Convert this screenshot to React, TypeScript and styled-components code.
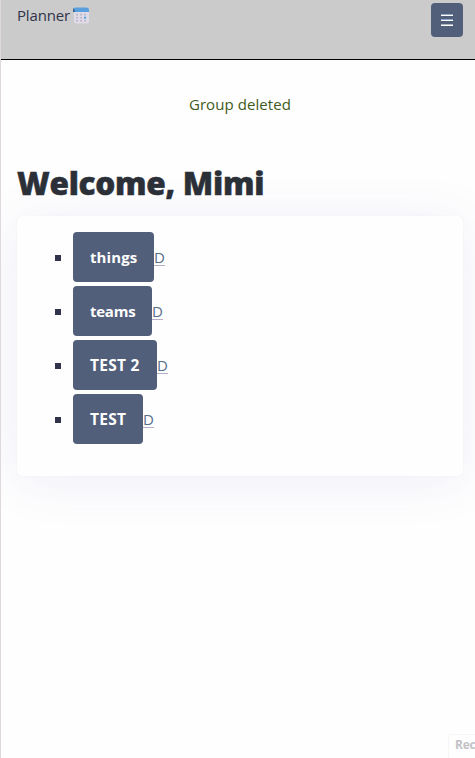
import React from "react";
import styled, { createGlobalStyle } from "styled-components";

const GlobalStyle = createGlobalStyle`
  *, *::before, *::after { box-sizing: border-box; }
  html, body { margin: 0; height: 100%; overflow: hidden; }
  body {
    background: #fefefe;
    color: #30334a;
    font: 400 15px/24px "Open Sans", "Noto Sans", sans-serif;
  }
`;

const Page = styled.div`
  position: relative;
  height: 758px;
  overflow: hidden;
  border-left: 1px solid #dfd9de;
`;

const Header = styled.header`
  display: flex;
  justify-content: space-between;
  align-items: flex-start;
  height: 60px;
  padding: 3px 12px 0 16px;
  background: #cbcbcb;
  border-bottom: 1px solid #000;
`;

const Brand = styled.div`
  display: flex;
  align-items: center;
  gap: 3px;
  height: 24px;
  letter-spacing: -0.15px;
`;

const BrandName = styled.span`
  width: 53px;
  white-space: nowrap;
`;

const MenuButton = styled.button`
  display: flex;
  align-items: center;
  justify-content: center;
  width: 32px;
  height: 34px;
  padding: 0;
  border: 0;
  border-radius: 4px;
  background: #525f7a;
`;

const Message = styled.p`
  margin: 32px 0 0;
  padding-left: 4px;
  text-align: center;
  letter-spacing: 0.08px;
  color: #3f5b20;
`;

const Title = styled.h1`
  margin: 43px 0 9px 16px;
  font: 800 31.5px/48px "Open Sans", "Noto Sans", sans-serif;
  letter-spacing: -0.28px;
  white-space: nowrap;
  color: #2b3038;
  -webkit-text-stroke: 0.5px #2b3038;
`;

const Card = styled.section`
  height: 260px;
  margin: 0 12px 0 16px;
  padding: 16px;
  border-radius: 5px;
  background: #fefefe;
  box-shadow: 0 0 2px rgba(75, 75, 140, 0.05), 0 5px 52px rgba(75, 75, 190, 0.09);
`;

const Groups = styled.ul`
  display: flex;
  flex-direction: column;
  gap: 4px;
  margin: 0;
  padding: 0 0 0 22px;
  list-style: none;
`;

const Group = styled.li`
  display: flex;
  align-items: center;
  height: 50px;
  &::before {
    content: "";
    width: 6px;
    height: 6px;
    margin: 2px 12px 0 0;
    background: #30334a;
  }
`;

const GroupButton = styled.button<{ $width: number; $size: number; $spacing: number }>`
  width: ${(p) => p.$width}px;
  height: 50px;
  padding: 0 0 0 17px;
  border: 0;
  border-radius: 4px;
  background: #525f7a;
  color: #fefefe;
  font: 700 ${(p) => p.$size}px/24px "Open Sans", "Noto Sans", sans-serif;
  letter-spacing: ${(p) => p.$spacing}px;
  text-align: left;
  white-space: nowrap;
`;

const DeleteLink = styled.a`
  width: 11px;
  height: 17px;
  border-bottom: 1px solid #b5afc5;
  color: #567089;
  font-size: 15px;
  line-height: 17px;
  text-align: center;
`;

const CornerLabel = styled.div`
  position: absolute;
  left: 447px;
  bottom: 0;
  width: 60px;
  height: 24px;
  padding-left: 6px;
  border: 1px solid #f6f6f6;
  border-width: 1px 0 0 1px;
  color: #c2c2c6;
  font: 700 12px/20px "Open Sans", "Noto Sans", sans-serif;
  letter-spacing: -0.2px;
`;

const CalendarIcon = () => (
  <svg width="17" height="17" viewBox="0 0 17 17" aria-hidden="true">
    <path d="M1 4.5h15v9.7a2.3 2.3 0 0 1-2.3 2.3H3.3A2.3 2.3 0 0 1 1 14.2z" fill="#e1dbe8" />
    <path d="M0 5V3A2.5 2.5 0 0 1 2.5.5h11A2.5 2.5 0 0 1 16 3v2z" fill="#5a9fdd" />
    <path d="M0 5V3q0-1 .8-1.7L2 4.2V5z" fill="#3b628e" />
    <path
      d="M3.2 6.7h1.8v1.8H3.2zM7.2 6.7h1.8v1.8H7.2zM11.2 6.7h1.8v1.8h-1.8zM3.2 9.9h1.8v1.6H3.2zM7.2 9.9h1.8v1.6H7.2zM3.2 12.9h1.8v1.6H3.2zM7.2 12.9h1.8v1.6H7.2zM11.2 12.9h1.8v1.6h-1.8z"
      fill="#b5b3ca"
    />
    <path d="M11 9.7h2.2v2H11z" fill="#55a6e4" />
  </svg>
);

const MenuIcon = () => (
  <svg width="12" height="13" viewBox="0 0 12 13" shapeRendering="crispEdges" aria-hidden="true">
    <path d="M0 .5h12M0 5.5h12" stroke="#8fa9c9" strokeWidth="1" />
    <path d="M0 1.5h12M0 6.5h12M0 11.5h12" stroke="#fff" strokeWidth="1" />
    <path d="M0 10.5h12" stroke="#aeb4c3" strokeWidth="1" />
  </svg>
);

const groups = [
  { name: "things", width: 81, size: 15, spacing: 0.1 },
  { name: "teams", width: 79, size: 15, spacing: -0.25 },
  { name: "TEST 2", width: 84, size: 15.5, spacing: 0.25 },
  { name: "TEST", width: 70, size: 15.5, spacing: 0.25 },
];

export default function App() {
  return (
    <Page>
      <GlobalStyle />
      <Header>
        <Brand>
          <BrandName>Planner</BrandName>
          <CalendarIcon />
        </Brand>
        <MenuButton aria-label="Menu">
          <MenuIcon />
        </MenuButton>
      </Header>
      <Message>Group deleted</Message>
      <Title>Welcome, Mimi</Title>
      <Card>
        <Groups>
          {groups.map((g) => (
            <Group key={g.name}>
              <GroupButton $width={g.width} $size={g.size} $spacing={g.spacing}>
                {g.name}
              </GroupButton>
              <DeleteLink>D</DeleteLink>
            </Group>
          ))}
        </Groups>
      </Card>
      <CornerLabel>Rec</CornerLabel>
    </Page>
  );
}
